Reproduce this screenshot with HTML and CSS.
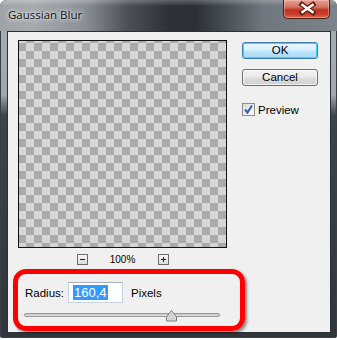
FILE: index.html
```html
<!DOCTYPE html>
<html>
<head>
<meta charset="utf-8">
<link rel="stylesheet" href="styles.css">
</head>
<body>
<div class="window">
  <div class="titlebar">
    <span class="title">Gaussian Blur</span>
    <div class="close">
      <svg width="47" height="19" viewBox="0 0 47 19">
        <path d="M18 4.5 L29 12.5 M29 4.5 L18 12.5" stroke="#5a1e14" stroke-width="5" stroke-linecap="square"/>
        <path d="M18.5 5 L28.5 12 M28.5 5 L18.5 12" stroke="#ffffff" stroke-width="2.6" stroke-linecap="square"/>
      </svg>
    </div>
  </div>
  <div class="client">
    <div class="left">
      <div class="preview"></div>
      <div class="zoom-row">
        <span class="zbtn"><svg width="11" height="11" viewBox="0 0 11 11"><path d="M3 5.5 H8" stroke="#222" stroke-width="1"/></svg></span>
        <span class="zoom-pct">100%</span>
        <span class="zbtn"><svg width="11" height="11" viewBox="0 0 11 11"><path d="M3 5.5 H8 M5.5 3 V8" stroke="#222" stroke-width="1"/></svg></span>
      </div>
      <div class="radius-row">
        <span class="lbl">Radius:</span>
        <span class="input"><span class="sel">160,4</span></span>
        <span class="unit">Pixels</span>
      </div>
      <div class="slider">
        <div class="track"></div>
        <svg class="thumb" width="13" height="13" viewBox="0 0 13 13"><path d="M1.5 12 V8 L6.5 1.5 L11.5 8 V12 Z" fill="#e4e4e4" stroke="#7a7a7a" stroke-width="1"/><path d="M2.5 11 V8.5 L6.5 3 L10.5 8.5 V11 Z" fill="#d2d2d2"/></svg>
      </div>
    </div>
    <div class="right">
      <div class="btn ok">OK</div>
      <div class="btn cancel">Cancel</div>
      <div class="check">
        <span class="box"><svg width="11" height="11" viewBox="0 0 11 11"><path d="M2 5.5 L4.5 8.5 L9 1.5" fill="none" stroke="#3b5ca8" stroke-width="2"/></svg></span>
        <span>Preview</span>
      </div>
    </div>
    <div class="annot"></div>
  </div>
</div>
</body>
</html>
```
FILE: styles.css
```css
html, body {
  margin: 0;
  padding: 0;
  background: #ffffff;
}
body {
  font-family: "Liberation Sans", Arial, sans-serif;
  font-size: 11px;
  color: #000;
}
.window {
  width: 337px;
  height: 338px;
  border-radius: 6px 6px 2px 2px;
  background:
    linear-gradient(90deg, rgba(170,175,180,0.0) 0%, rgba(0,0,0,0) 100%),
    linear-gradient(180deg, #a9adb1 0%, #a2a7ac 28%, #3d444b 34%, #2f353b 100%);
  box-shadow: inset 0 0 0 1px #3a4046;
  overflow: hidden;
}
.titlebar {
  height: 31px;
  display: flex;
  align-items: flex-start;
  background:
    linear-gradient(180deg, rgba(255,255,255,0.25) 0px, rgba(255,255,255,0) 6px),
    linear-gradient(90deg, #9ea3a8 0%, #a6aaae 10%, #8a9096 25%, #4a5056 38%, #2c3237 50%, #2a3036 58%, #4b5258 68%, #6f767d 78%, #7c838a 100%);
  border-radius: 6px 6px 0 0;
}
.title {
  font-family: "Open Sans", "Liberation Sans", sans-serif;
  font-size: 11.5px;
  line-height: 16px;
  margin: 7px 0 0 8px;
  color: #111;
  text-shadow: 0 0 6px rgba(255,255,255,0.9), 0 0 3px rgba(255,255,255,0.8);
}
.close {
  margin-left: auto;
  margin-right: 7px;
  width: 47px;
  height: 19px;
  box-sizing: border-box;
  border: 1px solid #4a2018;
  border-top: none;
  border-radius: 0 0 5px 5px;
  background: linear-gradient(180deg, #e6a293 0%, #d27060 40%, #c0321f 55%, #c8412c 80%, #dc6a50 100%);
  box-shadow: inset 0 0 0 1px rgba(255,200,190,0.45);
}
.close svg { display: block; }
.client {
  position: relative;
  margin: 0 6px 0 7px;
  height: 302px;
  box-sizing: border-box;
  border: 1px solid #2b3035;
  background: #f0f0f0;
  display: flex;
  padding: 8px 0 0 10px;
}
.left {
  width: 209px;
}
.preview {
  width: 207px;
  height: 206px;
  border: 1px solid #111;
  background-color: #d6d6d6;
  background-image: repeating-conic-gradient(#aaaaaa 0 25%, #d6d6d6 0 50%);
  background-size: 16px 16px;
  background-position: -1px -6px;
}
.zoom-row {
  display: flex;
  justify-content: center;
  align-items: center;
  margin-top: 6px;
  height: 11px;
}
.zbtn {
  width: 11px;
  height: 11px;
  box-sizing: border-box;
  border: 1px solid #6b6b6b;
  background: linear-gradient(180deg, #f6f6f6, #dcdcdc);
  display: flex;
}
.zbtn svg { display: block; margin: -1px; }
.zoom-pct {
  font-size: 10px;
  margin: 0 22px;
  width: 26px;
  text-align: center;
  line-height: 11px;
}
.radius-row {
  display: flex;
  align-items: center;
  margin-top: 17px;
  padding-left: 7px;
  height: 21px;
}
.lbl {
  width: 43px;
  font-size: 11.5px;
}
.input {
  width: 55px;
  height: 21px;
  box-sizing: border-box;
  border: 1px solid #c5d2e0;
  border-top-color: #abadb3;
  background: #fff;
  display: flex;
  align-items: center;
  padding-left: 4px;
}
.sel {
  background: #3399ff;
  color: #fff;
  font-size: 13px;
  line-height: 15px;
  padding: 0 1px;
}
.unit {
  margin-left: 8px;
  font-size: 11.5px;
}
.slider {
  position: relative;
  margin: 6px 0 0 6px;
  width: 196px;
  height: 13px;
}
.track {
  position: relative;
  top: 4px;
  height: 4px;
  box-sizing: border-box;
  border: 1px solid #9a9a9a;
  border-radius: 2px;
  background: linear-gradient(180deg, #c4c4c4, #e0e0e0);
}
.thumb {
  position: absolute;
  left: 141px;
  top: 0;
  display: block;
}
.right {
  margin-left: 15px;
  display: flex;
  flex-direction: column;
  padding-top: 2px;
}
.btn {
  width: 76px;
  height: 17px;
  box-sizing: border-box;
  border: 1px solid #707070;
  border-radius: 3px;
  background: linear-gradient(180deg, #f2f2f2 0%, #ebebeb 45%, #dddddd 55%, #cfcfcf 100%);
  text-align: center;
  font-size: 11.5px;
  line-height: 15px;
  box-shadow: inset 0 0 0 1px rgba(255,255,255,0.7);
}
.btn.ok {
  border-color: #3c7fb1;
  background: linear-gradient(180deg, #eaf6fd 0%, #d9f0fc 45%, #bee6fd 55%, #a7d9f5 100%);
  box-shadow: inset 0 0 0 1px #48d0f8, 0 0 0 0 transparent;
}
.btn.cancel {
  margin-top: 10px;
}
.check {
  margin-top: 17px;
  display: flex;
  align-items: center;
  font-size: 11.5px;
  height: 13px;
}
.box {
  width: 13px;
  height: 13px;
  box-sizing: border-box;
  border: 1px solid #8e8f8f;
  background: linear-gradient(135deg, #dcdcdc, #fbfbfb);
  display: flex;
  align-items: center;
  justify-content: center;
  margin-right: 3px;
}
.box svg { display: block; }
.annot {
  position: absolute;
  left: 5px;
  top: 237px;
  width: 232px;
  height: 62px;
  box-sizing: border-box;
  border: 5px solid #ff0000;
  border-radius: 13px;
  box-shadow: 2px 2px 3px rgba(0,0,0,0.45);
}
```
